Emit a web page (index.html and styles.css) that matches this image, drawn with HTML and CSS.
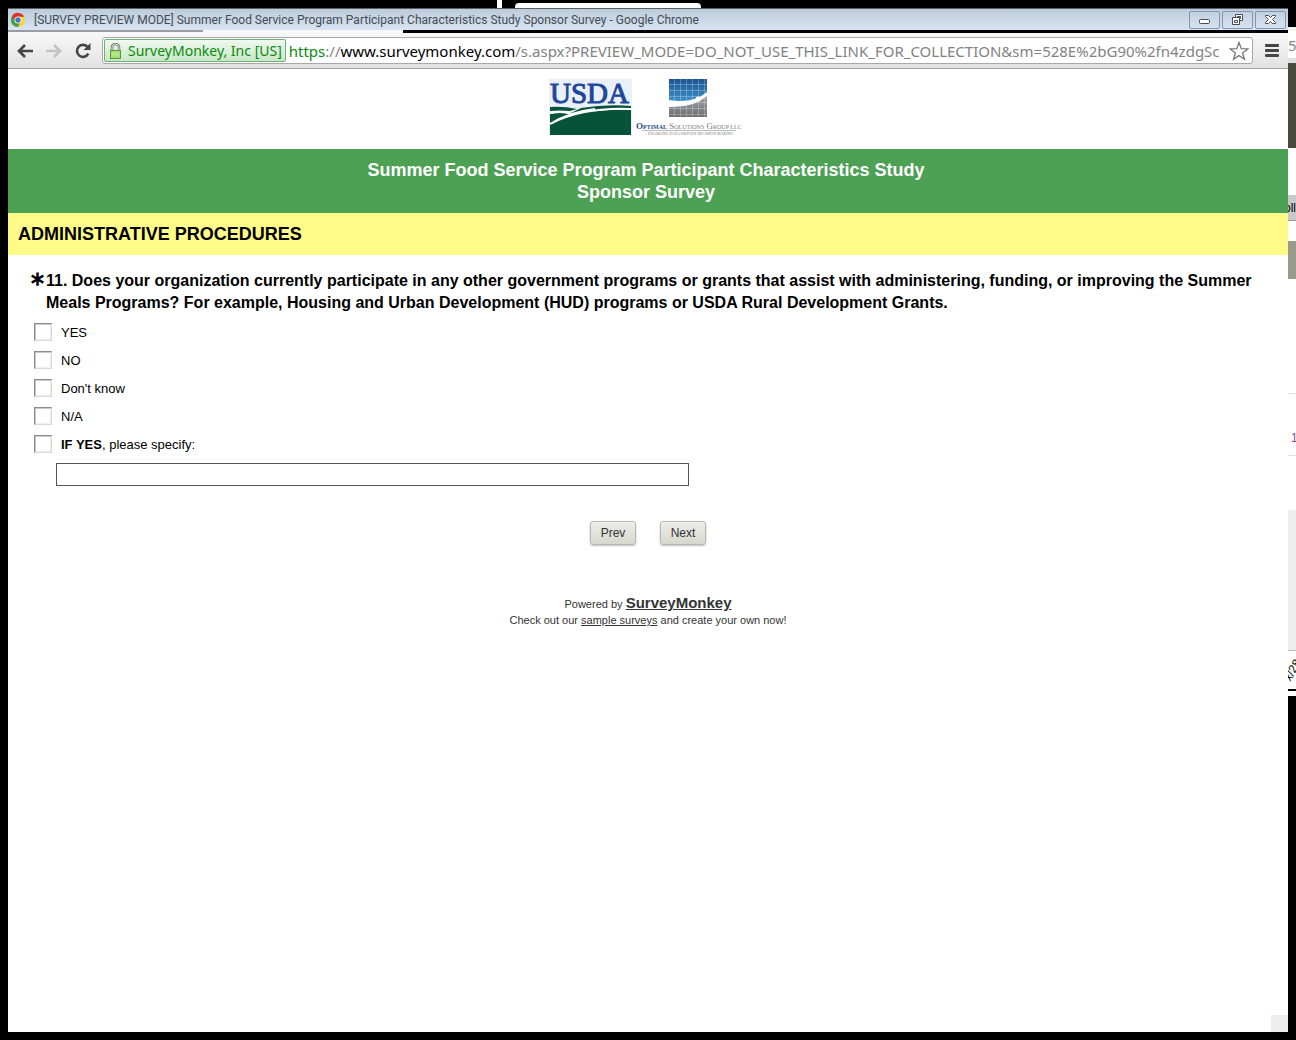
FILE: index.html
```html
<!DOCTYPE html>
<html lang="en">
<head>
  <meta charset="UTF-8">
  <meta name="viewport" content="width=device-width, initial-scale=1.0">
  <title>Summer Food Service Program Participant Characteristics Study Sponsor Survey</title>
  <link rel="stylesheet" href="styles.css">
</head>
<body>
  <div class="desktop-top">
    <span class="top-mark"></span>
    <span class="top-tab"></span>
  </div>

  <div class="window">
    <div class="title-bar">
      <svg class="app-icon" width="16" height="16" viewBox="0 0 16 16">
        <circle cx="8" cy="8" r="7" fill="#fbd02f"/>
        <path d="M2 4.200A7 7 0 0 0 7.600 15L10.800 9.600L8 8L5 9z" fill="#43a047"/>
        <path d="M2 4.200L5 9L8 4.700H14.200A7 7 0 0 0 2 4.200z" fill="#d8342a"/>
        <circle cx="8" cy="8" r="3.500" fill="#fff"/>
        <circle cx="8" cy="8" r="2.700" fill="#3c78c8"/>
      </svg>
      <span class="title-text">[SURVEY PREVIEW MODE] Summer Food Service Program Participant Characteristics Study Sponsor Survey - Google Chrome</span>
      <div class="window-buttons">
        <button class="win-btn" aria-label="Minimize">
          <svg width="13" height="11" viewBox="0 0 13 11"><rect x="1.500" y="5.500" width="10" height="4" rx="1" fill="#fff" stroke="#474b58"/></svg>
        </button>
        <button class="win-btn" aria-label="Restore">
          <svg width="13" height="11" viewBox="0 0 13 11" fill="#fff" stroke="#474b58">
            <path d="M4.500.5h7v6h-7z"/><path d="M6.500 2.500h3v2h-3z"/>
            <path d="M1.500 3.500h7v7h-7z"/><path d="M3.500 6.500h3v2h-3z"/>
          </svg>
        </button>
        <button class="win-btn" aria-label="Close">
          <svg width="13" height="11" viewBox="0 0 13 11"><path d="M1.500 1.500h3l2 2 2-2h3v1l-3 3 3 3v1h-3l-2-2-2 2h-3v-1l3-3-3-3z" fill="#fff" stroke="#474b58"/></svg>
        </button>
      </div>
    </div>

    <div class="tab-edge">
      <span class="tab-shadow"></span>
      <span class="tab-current"></span>
    </div>

    <div class="toolbar">
      <button class="tool-btn" aria-label="Back">
        <svg width="16" height="14" viewBox="0 0 16 14" fill="none" stroke="#454545" stroke-width="2.600"><path d="M8 1L2 7l6 6M2 7h14"/></svg>
      </button>
      <button class="tool-btn" aria-label="Forward">
        <svg width="16" height="14" viewBox="0 0 16 14" fill="none" stroke="#c3c3c3" stroke-width="2.600"><path d="M8 1l6 6-6 6M14 7H0"/></svg>
      </button>
      <button class="tool-btn" aria-label="Reload">
        <svg width="16" height="16" viewBox="0 0 16 16"><path d="M12.800 4.300A6 6 0 1 0 13.300 10.700" fill="none" stroke="#454545" stroke-width="2.600"/><path d="M15.500 0v7h-7z" fill="#454545"/></svg>
      </button>
      <div class="address-bar">
        <div class="site-id">
          <svg width="13" height="16" viewBox="0 0 13 16">
            <path d="M3 8V4.500a3.500 3.500 0 0 1 7 0V8" fill="none" stroke="#777" stroke-width="2.600"/>
            <path d="M3 8V4.500a3.500 3.500 0 0 1 7 0V8" fill="none" stroke="#ddd"/>
            <rect x="1.500" y="7.500" width="10" height="8" fill="#a5de74" stroke="#5e9440"/>
            <path d="M3 10h7M3 12h7" stroke="#bdec95"/>
          </svg>
          <span>SurveyMonkey, Inc [US]</span>
        </div>
        <div class="url"><span class="scheme">https</span>://<span class="host">www.surveymonkey.com</span>/s.aspx?PREVIEW_MODE=DO_NOT_USE_THIS_LINK_FOR_COLLECTION&amp;sm=528E%2bG90%2fn4zdgSc</div>
        <button class="star-btn" aria-label="Bookmark this page">
          <svg width="20" height="20" viewBox="0 0 20 20"><path d="M10 1.500l2.300 6.200 6.500.2-5.200 4 1.900 6.400-5.500-3.700-5.500 3.700 1.900-6.400-5.200-4 6.500-.2z" fill="#fff" stroke="#777" stroke-width="1.300"/></svg>
        </button>
      </div>
      <button class="menu-btn" aria-label="Menu">
        <svg width="14" height="13" viewBox="0 0 14 13" fill="#454545"><rect width="14" height="3" rx="1"/><rect y="5" width="14" height="3" rx="1"/><rect y="10" width="14" height="3" rx="1"/></svg>
      </button>
    </div>

    <main class="page">
      <div class="logos">
        <svg width="83" height="56" viewBox="0 0 83 56">
          <rect width="83" height="56" fill="#eaf0f7"/>
          <text x="1" y="24" class="usda-text">USDA</text>
          <path d="M1 28q14-1 27 2l-7 2Q11 31 1 32zM32 29q25-4 50-2v2q-27-1-48 6L1 46V35q10-2 19 0z" fill="#07533a"/>
          <path d="M1 56V46Q30 29 82 31V56z" fill="#07533a"/>
          <path d="M1 34q10-2 20 0M3 44Q35 28 82 30M1 45q19-12 45-15" fill="none" stroke="#fff" stroke-width="2"/>
        </svg>
        <svg width="112" height="58" viewBox="0 0 112 58">
          <defs>
            <linearGradient id="sky" x1="0" y1="0" x2="0" y2="1"><stop offset="0" stop-color="#1c5590"/><stop offset="1" stop-color="#3c91c9"/></linearGradient>
            <linearGradient id="ground" x1="0" y1="0" x2="0" y2="1"><stop offset="0" stop-color="#a0a2a5"/><stop offset="1" stop-color="#6d7073"/></linearGradient>
          </defs>
          <path d="M33 0h38v13Q57 25 33 21z" fill="url(#sky)"/>
          <path d="M71 17v21H33V28Q57 29 71 17z" fill="url(#ground)"/>
          <path d="M38.500 0v38M44.500 0v38M50.500 0v38M56.500 0v38M62.500 0v38M68.500 0v38M33 5.500h38M33 11.500h38M33 17.500h38M33 23.500h38M33 29.500h38M33 35.500h38" stroke="#fff" stroke-opacity=".25"/>
          <circle cx="62" cy="20" r="2.500" fill="#fff"/>
          <text x="0" y="50" class="optimal-text"><tspan class="optimal-name">O<tspan class="small-cap">PTIMAL</tspan></tspan> S<tspan class="small-cap">OLUTIONS</tspan> G<tspan class="small-cap">ROUP LLC</tspan></text>
          <path d="M6 51.500h94" stroke="#bbb"/>
          <text x="12" y="56" class="optimal-tag">ENABLING DATA-DRIVEN DECISION MAKING</text>
        </svg>
      </div>

      <h1 class="survey-title">Summer Food Service Program Participant Characteristics Study<br>Sponsor Survey</h1>
      <h2 class="section-title">ADMINISTRATIVE PROCEDURES</h2>

      <form class="survey-form">
        <fieldset class="question">
          <legend class="question-text"><span class="required">*</span><span>11. Does your organization currently participate in any other government programs or grants that assist with administering, funding, or improving the Summer Meals Programs? For example, Housing and Urban Development (HUD) programs or USDA Rural Development Grants.</span></legend>
          <label class="option"><input type="checkbox" name="q11" value="yes"><span>YES</span></label>
          <label class="option"><input type="checkbox" name="q11" value="no"><span>NO</span></label>
          <label class="option"><input type="checkbox" name="q11" value="dk"><span>Don't know</span></label>
          <label class="option"><input type="checkbox" name="q11" value="na"><span>N/A</span></label>
          <label class="option"><input type="checkbox" name="q11" value="specify"><span><b>IF YES</b>, please specify:</span></label>
          <input type="text" class="specify" name="q11_other" aria-label="If yes, please specify">
        </fieldset>
        <div class="nav-buttons">
          <button type="button" class="btn">Prev</button>
          <button type="button" class="btn">Next</button>
        </div>
      </form>

      <footer class="powered">
        <div>Powered by <a href="#" class="brand">SurveyMonkey</a></div>
        <div>Check out our <a href="#">sample surveys</a> and create your own now!</div>
      </footer>
      <div class="scroll-corner"></div>
    </main>
  </div>

  <!-- slice of the windows behind, right of the browser -->
  <div class="behind">
    <div class="b-chrome">5</div>
    <div class="b-dark"></div>
    <div class="b-tab"><span>oll</span></div>
    <div class="b-band"></div>
    <div class="b-row">1</div>
    <div class="b-gray"></div>
    <div class="b-captcha"><span>x/28</span></div>
  </div>
</body>
</html>
```

FILE: styles.css
```css
* {
  box-sizing: border-box;
}

body {
  margin: 0;
  min-height: 100vh;
  display: grid;
  grid-template-columns: 8px minmax(0, 1fr) 8px;
  grid-template-rows: 8px 1fr 8px;
  background-color: #000;
  font-family: "Liberation Sans", Arial, sans-serif;
}

button {
  padding: 0;
  border: none;
  background: none;
}

.desktop-top {
  grid-column: 2;
  display: flex;
  gap: 13px;
  padding-left: 489px;
}

.top-mark {
  width: 5px;
  background-color: #fff;
}

.top-tab {
  width: 186px;
  margin-top: 3px;
  background-color: #fff;
  border-radius: 4px 4px 0 0;
}

.window {
  grid-column: 2;
  grid-row: 2;
  display: flex;
  flex-direction: column;
}

/* title bar */
.title-bar {
  display: flex;
  align-items: center;
  height: 22px;
  padding-left: 2px;
  border-top: 1px solid #55606b;
  background-image: linear-gradient(#bccbdb, #d8e4f1);
}

.title-text {
  flex: 1;
  margin-left: 8px;
  font-family: Roboto, "Open Sans", sans-serif;
  font-size: 12px;
  line-height: 18px;
  white-space: nowrap;
  overflow: hidden;
  color: #454b55;
}

.window-buttons {
  display: flex;
  gap: 2px;
  padding-right: 2px;
}

.win-btn {
  display: flex;
  align-items: center;
  justify-content: center;
  width: 31px;
  height: 18px;
  border: 1px solid #8493ae;
  border-radius: 2px;
  background-image: linear-gradient(#c3d0e0, #d5e2f0);
}

.tab-edge {
  display: flex;
  height: 3px;
}

.tab-shadow {
  width: 195px;
  border-bottom: 1px solid #f7f7f7;
  background-color: #999ca3;
}

.tab-current {
  width: 200px;
  background-color: #f8f8f8;
}

/* toolbar */
.toolbar {
  display: flex;
  align-items: center;
  height: 36px;
  padding: 0 9px;
  border-bottom: 1px solid #a5a5a5;
  background-image: linear-gradient(#f8f8f8, #e2e2e2);
}

.tool-btn {
  display: flex;
  width: 17px;
  margin-right: 12px;
}

.address-bar {
  flex: 1;
  min-width: 0;
  display: flex;
  align-items: center;
  height: 27px;
  margin-left: -2px;
  margin-right: 12px;
  border: 1px solid #a9a9a9;
  border-radius: 3px;
  background-color: #fff;
  font-family: "Noto Sans", sans-serif;
  font-size: 15px;
  line-height: 20px;
}

.site-id {
  display: flex;
  align-items: center;
  gap: 6px;
  height: 23px;
  margin-left: 1px;
  padding: 0 3px 0 4px;
  border: 1px solid #6db272;
  border-radius: 2px;
  background-image: linear-gradient(#f0f8f0, #c8e8c8);
  font-size: 14px;
  white-space: nowrap;
  color: #0b8a0b;
}

.url {
  flex: 1;
  min-width: 0;
  margin-left: 3px;
  overflow: hidden;
  white-space: nowrap;
  color: #828282;
}

.scheme {
  color: #0b8a0b;
}

.host {
  color: #000;
}

.star-btn {
  display: flex;
  margin-right: 3px;
}

.menu-btn {
  display: flex;
  width: 14px;
}

/* survey */
.page {
  flex: 1;
  display: flex;
  flex-direction: column;
  background-color: #fff;
}

.logos {
  display: flex;
  justify-content: center;
  gap: 4px;
  height: 80px;
  padding-top: 10px;
}

.usda-text {
  font-family: "Liberation Serif", serif;
  font-size: 29px;
  fill: #21469c;
  stroke: #21469c;
}

.optimal-text {
  font-family: "Liberation Serif", serif;
  font-size: 9px;
  fill: #777b80;
}

.small-cap {
  font-size: 6px;
}

.optimal-name {
  fill: #1f4e80;
  font-weight: bold;
}

.optimal-tag {
  font-family: "Liberation Serif", serif;
  font-size: 4px;
  fill: #777;
}

.survey-title {
  margin: 0;
  padding: 10px 12px 10px 8px;
  background-color: #4da154;
  color: #fff;
  font-size: 18px;
  line-height: 22px;
  text-align: center;
}

.section-title {
  margin: 0;
  padding: 10px;
  background-color: #fffb88;
  color: #000;
  font-size: 18px;
  line-height: 22px;
}

.question {
  margin: 0;
  padding: 15px 24px 0 23px;
  border: none;
}

.question-text {
  display: flex;
  float: left;
  width: 100%;
  padding: 0;
  margin-bottom: 4px;
  font-size: 16px;
  font-weight: bold;
  line-height: 22px;
}

.required {
  flex: 0 0 15px;
  font-family: "DejaVu Sans", sans-serif;
  font-size: 26px;
  font-weight: normal;
  -webkit-text-stroke: 1px #000;
  line-height: 28px;
}

.option {
  clear: both;
  display: flex;
  align-items: center;
  height: 28px;
  padding-left: 3px;
  font-size: 13px;
}

.option input {
  appearance: none;
  width: 18px;
  height: 18px;
  margin: 0 9px 0 0;
  border: 1px solid;
  border-color: #8c8c8c #d8d8d8 #d8d8d8 #8c8c8c;
  box-shadow: inset 1px 1px #c8c8c8, inset -1px -1px #efefef;
}

.specify {
  display: block;
  width: 633px;
  max-width: 100%;
  height: 23px;
  margin: 5px 0 0 25px;
  padding: 2px;
  border: 1px solid #555;
  font-size: 13px;
}

.nav-buttons {
  display: flex;
  justify-content: center;
  gap: 24px;
  margin-top: 35px;
}

.btn {
  width: 46px;
  height: 24px;
  border: 1px solid #b7b8b1;
  border-radius: 3px;
  background-image: linear-gradient(#eeeeea, #d6d7ce);
  box-shadow: 0 1px 2px #bbb;
  color: #333;
  font-family: inherit;
  font-size: 12px;
}

.powered {
  margin-top: 50px;
  text-align: center;
  color: #333;
  font-size: 11px;
  line-height: 16px;
}

.powered a {
  color: #333;
}

.powered .brand {
  font-size: 15px;
  font-weight: bold;
}

.scroll-corner {
  width: 17px;
  height: 17px;
  margin-top: auto;
  margin-left: auto;
  background-color: #eee;
}

/* windows behind */
.behind {
  grid-column: 3;
  grid-row: 1 / 4;
  align-self: start;
  margin-top: 27px;
  height: 669px;
  overflow: hidden;
  background-color: #fff;
  font-size: 12px;
}

.b-chrome {
  height: 36px;
  padding-top: 7px;
  border-top: 4px solid #f3f3f3;
  border-bottom: 5px solid #ddd;
  color: #828282;
  font-family: "Noto Sans", sans-serif;
  font-size: 15px;
  line-height: 14px;
}

.b-dark {
  height: 85px;
  background-color: #4b493b;
}

.b-tab {
  display: flex;
  justify-content: flex-end;
  height: 26px;
  margin-top: 47px;
  border-bottom: 1px solid #999;
  background-color: #c9c9c9;
  line-height: 26px;
}

.b-band {
  height: 38px;
  margin-top: 20px;
  background-color: #9c9a8d;
}

.b-row {
  height: 63px;
  margin-top: 114px;
  padding-left: 3px;
  border-top: 1px solid #ddd;
  border-bottom: 1px solid #ddd;
  color: #8a4a8a;
  line-height: 88px;
}

.b-gray {
  height: 141px;
  margin-top: 54px;
  border-bottom: 1px solid #bbb;
  background-color: #eee;
}

.b-captcha {
  display: flex;
  align-items: center;
  justify-content: center;
  height: 40px;
  border-bottom: 2px solid #000;
}

.b-captcha span {
  transform: rotate(-60deg);
}
```
